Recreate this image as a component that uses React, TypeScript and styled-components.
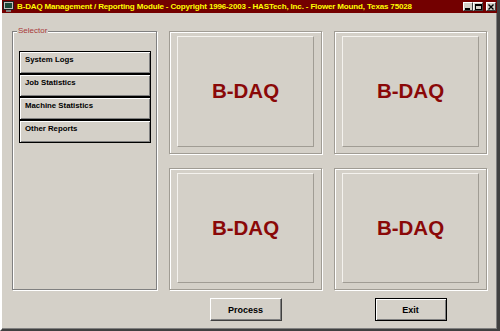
import styled, { createGlobalStyle } from 'styled-components';

const GlobalStyle = createGlobalStyle`
    html, body {
        margin: 0;
        padding: 0;
        background: #d4d0c8;
    }
    * {
        box-sizing: border-box;
    }
`;

const Window = styled.div`
    width: 500px;
    height: 331px;
    display: flex;
    flex-direction: column;
    background: #d4d0c8;
    border-left: 2px solid #ffffff;
    border-right: 3px solid #404040;
    border-bottom: 2px solid #404040;
    box-shadow: inset -1px -1px 0 #808080;
    overflow: hidden;
    font-family: "Liberation Sans", Arial, sans-serif;
`;

const TitleBar = styled.div`
    height: 13px;
    flex: none;
    display: flex;
    align-items: center;
    gap: 3px;
    padding: 0 1px 0 1px;
    background: #730000;
`;

const TitleText = styled.span`
    flex: 1;
    color: #ffff00;
    font-weight: bold;
    font-size: 8px;
    letter-spacing: -0.15px;
    white-space: nowrap;
    line-height: 13px;
`;

const Controls = styled.div`
    display: flex;
    align-items: center;
`;

const CtlButton = styled.div<{ $gap?: boolean }>`
    width: 10px;
    height: 9px;
    margin-left: ${(p) => (p.$gap ? '3px' : '0')};
    background: #d4d0c8;
    border-top: 1px solid #ffffff;
    border-left: 1px solid #ffffff;
    border-right: 1px solid #404040;
    border-bottom: 1px solid #404040;
    display: flex;
    align-items: center;
    justify-content: center;
`;

const Body = styled.div`
    flex: 1;
    display: flex;
    gap: 12px;
    padding: 18px 10px 8px 10px;
`;

const GroupBox = styled.div`
    position: relative;
    width: 146px;
    height: 259px;
    border: 1px solid #808080;
    box-shadow: inset 1px 1px 0 #ffffff, 1px 1px 0 #ffffff;
    padding: 19px 5px 0 6px;
`;

const GroupLabel = styled.span`
    position: absolute;
    top: -6px;
    left: 4px;
    padding: 0 1px;
    background: #d4d0c8;
    color: #a83a3a;
    font-size: 8px;
    line-height: 10px;
`;

const SelectorList = styled.div`
    display: flex;
    flex-direction: column;
`;

const SelectorButton = styled.div`
    height: 23px;
    border: 1px solid #000000;
    box-shadow: inset 1px 1px 0 #ffffff, inset -1px -1px 0 #808080;
    padding: 3px 0 0 5px;
    font-size: 7.8px;
    font-weight: bold;
    color: #000000;
    line-height: 10px;
`;

const RightColumn = styled.div`
    flex: 1;
    display: flex;
    flex-direction: column;
    gap: 8px;
`;

const PanelGrid = styled.div`
    height: 259px;
    display: grid;
    grid-template-columns: 153px 153px;
    grid-template-rows: 1fr 1fr;
    column-gap: 12px;
    row-gap: 14px;
`;

const PanelFrame = styled.div`
    display: flex;
    border: 1px solid #a09c94;
    box-shadow: inset 1px 1px 0 #ffffff, 1px 1px 0 #ffffff;
    padding: 4px 7px 6px 7px;
`;

const PanelFace = styled.div`
    flex: 1;
    display: flex;
    align-items: center;
    justify-content: center;
    border-top: 1px solid #f4f2ee;
    border-left: 1px solid #f4f2ee;
    border-right: 1px solid #a09c94;
    border-bottom: 1px solid #a09c94;
    color: #8a0808;
    font-size: 20.5px;
    font-weight: bold;
`;

const ButtonRow = styled.div`
    display: grid;
    grid-template-columns: 153px 153px;
    column-gap: 12px;
    justify-items: center;
`;

const PushButton = styled.div<{ $default?: boolean }>`
    width: 72px;
    height: 23px;
    display: flex;
    align-items: center;
    justify-content: center;
    border: 1px solid ${(p) => (p.$default ? '#000000' : '#ffffff')};
    border-right-color: ${(p) => (p.$default ? '#000000' : '#404040')};
    border-bottom-color: ${(p) => (p.$default ? '#000000' : '#404040')};
    box-shadow: ${(p) =>
        p.$default
            ? 'inset 1px 1px 0 #ffffff, inset -1px -1px 0 #808080'
            : 'inset -1px -1px 0 #808080'};
    font-size: 9px;
    font-weight: bold;
    color: #000000;
`;

const AppIcon = () => (
    <svg width="11" height="11" viewBox="0 0 11 11">
        <rect x="0.5" y="0.5" width="10" height="8" fill="#c0c0c0" stroke="#202020" />
        <rect x="2" y="2" width="7" height="5" fill="#1c4a3a" />
        <rect x="3" y="9" width="5" height="2" fill="#808080" />
    </svg>
);

const selectorItems = ['System Logs', 'Job Statistics', 'Machine Statistics', 'Other Reports'];

export default function App() {
    return (
        <>
            <GlobalStyle />
            <Window>
                <TitleBar>
                    <AppIcon />
                    <TitleText>
                        B-DAQ Management / Reporting Module - Copyright 1996-2003 - HASTech, Inc. - Flower Mound, Texas 75028
                    </TitleText>
                    <Controls>
                        <CtlButton>
                            <svg width="6" height="6" viewBox="0 0 6 6">
                                <rect x="0" y="4" width="5" height="2" fill="#000" />
                            </svg>
                        </CtlButton>
                        <CtlButton>
                            <svg width="7" height="6" viewBox="0 0 7 6">
                                <rect x="0.5" y="0.5" width="6" height="5" fill="none" stroke="#000" />
                                <rect x="0" y="0" width="7" height="2" fill="#000" />
                            </svg>
                        </CtlButton>
                        <CtlButton $gap>
                            <svg width="6" height="6" viewBox="0 0 6 6">
                                <path d="M0.5 0.5 L5.5 5.5 M5.5 0.5 L0.5 5.5" stroke="#000" strokeWidth="1.4" />
                            </svg>
                        </CtlButton>
                    </Controls>
                </TitleBar>
                <Body>
                    <GroupBox>
                        <GroupLabel>Selector</GroupLabel>
                        <SelectorList>
                            {selectorItems.map((item) => (
                                <SelectorButton key={item}>{item}</SelectorButton>
                            ))}
                        </SelectorList>
                    </GroupBox>
                    <RightColumn>
                        <PanelGrid>
                            {[0, 1, 2, 3].map((i) => (
                                <PanelFrame key={i}>
                                    <PanelFace>B-DAQ</PanelFace>
                                </PanelFrame>
                            ))}
                        </PanelGrid>
                        <ButtonRow>
                            <PushButton>Process</PushButton>
                            <PushButton $default>Exit</PushButton>
                        </ButtonRow>
                    </RightColumn>
                </Body>
            </Window>
        </>
    );
}
